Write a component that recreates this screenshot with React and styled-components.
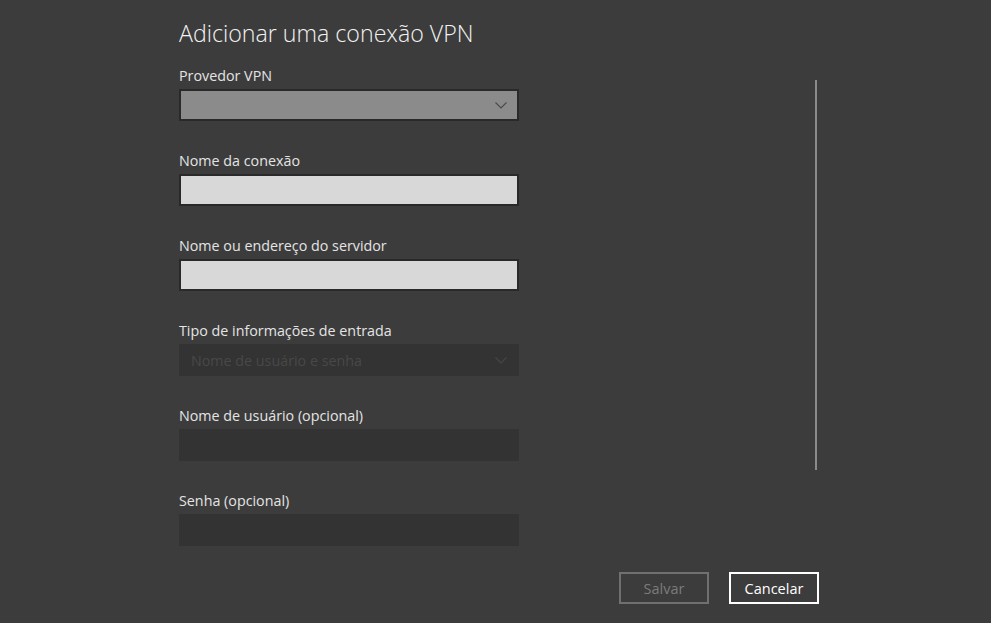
import React from "react";
import styled, { createGlobalStyle } from "styled-components";

const Global = createGlobalStyle`
  html, body { margin: 0; padding: 0; background: #3c3c3c; }
  body { font-family: "Open Sans", "Noto Sans", sans-serif; }
`;

const Page = styled.div`
  width: 991px;
  height: 623px;
  background: #3c3c3c;
  display: grid;
  grid-template-columns: 179px 340px 296px 2px 1fr;
  grid-template-rows: auto 1fr;
  overflow: hidden;
`;

const Form = styled.div`
  grid-column: 2;
  grid-row: 1;
  display: flex;
  flex-direction: column;
  padding-top: 16px;
`;

const Title = styled.h1`
  margin: 0 0 16px;
  font-size: 23.2px;
  font-weight: 300;
  line-height: 34px;
  color: #f2f2f2;
  white-space: nowrap;
`;

const Field = styled.div`
  display: flex;
  flex-direction: column;
  margin-bottom: 30px;
  &:last-child { margin-bottom: 0; }
`;

const Label = styled.label`
  font-size: 14.3px;
  line-height: 19px;
  color: #e4e4e4;
  margin-bottom: 4px;
  white-space: nowrap;
`;

const Box = styled.div`
  box-sizing: border-box;
  width: 340px;
  height: 32px;
  display: flex;
  align-items: center;
  justify-content: space-between;
  padding: 0 10px 0 10px;
  background: ${(p) => p.$bg};
  border: 2px solid ${(p) => (p.$bordered ? "#292929" : p.$bg)};
  font-size: 14.3px;
  color: #484848;
`;

const Chevron = ({ color }) => (
  <svg width="12" height="7" viewBox="0 0 12 7">
    <path d="M0.5 0.5 L6 6 L11.5 0.5" fill="none" stroke={color} strokeWidth="1.1" />
  </svg>
);

const ScrollTrack = styled.div`
  grid-column: 4;
  grid-row: 1 / span 2;
  margin-top: 80px;
  width: 2px;
  height: 390px;
  background: #8a8a8a;
`;

const Footer = styled.div`
  grid-column: 2 / span 3;
  grid-row: 2;
  display: flex;
  justify-content: flex-end;
  gap: 20px;
  padding-top: 26px;
  margin-right: -2px;
`;

const Button = styled.button`
  box-sizing: border-box;
  width: 90px;
  height: 32px;
  background: transparent;
  border: 2px solid ${(p) => (p.$disabled ? "#707070" : "#ffffff")};
  color: ${(p) => (p.$disabled ? "#7b7b7b" : "#ffffff")};
  font-family: inherit;
  font-size: 14.5px;
  padding: 0;
`;

export default function App() {
  return (
    <>
      <Global />
      <Page>
        <Form>
          <Title>Adicionar uma conexão VPN</Title>
          <Field>
            <Label>Provedor VPN</Label>
            <Box $bg="#8b8b8b" $bordered>
              <span />
              <Chevron color="#4a4a4a" />
            </Box>
          </Field>
          <Field>
            <Label>Nome da conexão</Label>
            <Box $bg="#d8d8d8" $bordered />
          </Field>
          <Field>
            <Label>Nome ou endereço do servidor</Label>
            <Box $bg="#d8d8d8" $bordered />
          </Field>
          <Field>
            <Label>Tipo de informações de entrada</Label>
            <Box $bg="#333333">
              <span>Nome de usuário e senha</span>
              <Chevron color="#474747" />
            </Box>
          </Field>
          <Field>
            <Label>Nome de usuário (opcional)</Label>
            <Box $bg="#333333" />
          </Field>
          <Field>
            <Label>Senha (opcional)</Label>
            <Box $bg="#333333" />
          </Field>
        </Form>
        <ScrollTrack />
        <Footer>
          <Button $disabled>Salvar</Button>
          <Button>Cancelar</Button>
        </Footer>
      </Page>
    </>
  );
}
